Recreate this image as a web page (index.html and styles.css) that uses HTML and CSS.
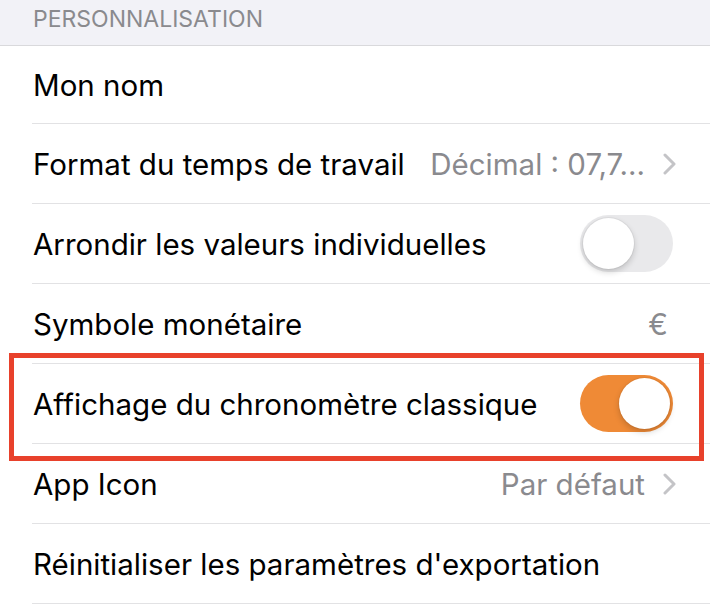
FILE: index.html
```html
<!DOCTYPE html>
<html lang="fr">
<head>
<meta charset="utf-8">
<title>Personnalisation</title>
<link rel="stylesheet" href="styles.css">
</head>
<body>
<div class="screen">
  <div class="section-header">PERSONNALISATION</div>
  <div class="list">
    <div class="row first">
      <span class="label">Mon nom</span>
    </div>
    <div class="row">
      <span class="label">Format du temps de travail</span>
      <span class="detail"><span class="value">Décimal : 07,7...</span><svg class="chevron" viewBox="0 0 13 22" width="13" height="22"><path d="M2 2 L11 11 L2 20" fill="none" stroke="#c4c4c7" stroke-width="3" stroke-linecap="round" stroke-linejoin="round"/></svg></span>
    </div>
    <div class="row">
      <span class="label">Arrondir les valeurs individuelles</span>
      <span class="toggle off"><span class="knob"></span></span>
    </div>
    <div class="row">
      <span class="label">Symbole monétaire</span>
      <span class="detail"><span class="value euro">€</span></span>
    </div>
    <div class="row">
      <span class="label">Affichage du chronomètre classique</span>
      <span class="toggle on"><span class="knob"></span></span>
    </div>
    <div class="row">
      <span class="label">App Icon</span>
      <span class="detail"><span class="value">Par défaut</span><svg class="chevron" viewBox="0 0 13 22" width="13" height="22"><path d="M2 2 L11 11 L2 20" fill="none" stroke="#c4c4c7" stroke-width="3" stroke-linecap="round" stroke-linejoin="round"/></svg></span>
    </div>
    <div class="row">
      <span class="label">Réinitialiser les paramètres d'exportation</span>
    </div>
  </div>
  <div class="highlight"></div>
</div>
</body>
</html>
```

FILE: styles.css
```css
html, body {
  margin: 0;
  padding: 0;
  background: #ffffff;
}

.screen {
  position: relative;
  width: 710px;
  height: 604px;
  overflow: hidden;
  font-family: Inter, "Liberation Sans", Arial, sans-serif;
  background: #ffffff;
}

.section-header {
  height: 46px;
  box-sizing: border-box;
  padding: 7px 0 0 33px;
  font-size: 23px;
  line-height: 24px;
  color: #8a8a8e;
  background: #f2f2f7;
  border-bottom: 1px solid #d9d9dc;
}

.list {
  display: flex;
  flex-direction: column;
}

.row {
  display: flex;
  align-items: center;
  justify-content: space-between;
  margin-left: 32px;
  height: 80px;
  box-sizing: border-box;
  padding-left: 1px;
  padding-right: 34px;
  border-bottom: 1px solid #e2e2e4;
}

.row.first {
  height: 78px;
}

.label {
  font-size: 29.5px;
  color: #000000;
  white-space: nowrap;
}

.detail {
  display: flex;
  align-items: center;
  gap: 18px;
}

.value {
  font-size: 29.5px;
  color: #8a8a8e;
  white-space: nowrap;
}

.value.euro {
  margin-right: 8px;
}

.chevron {
  display: block;
}

.toggle {
  position: relative;
  display: block;
  width: 93px;
  height: 57px;
  border-radius: 29px;
  margin-right: 3px;
  flex-shrink: 0;
}

.toggle.off {
  background: #e9e9eb;
}

.toggle.on {
  background: #ef8a36;
}

.knob {
  position: absolute;
  top: 3px;
  width: 51px;
  height: 51px;
  border-radius: 50%;
  background: #ffffff;
  box-shadow: 0 3px 6px rgba(0, 0, 0, 0.18), 0 0 0 1px rgba(0, 0, 0, 0.04);
}

.toggle.off .knob {
  left: 3px;
}

.toggle.on .knob {
  right: 3px;
}

.highlight {
  position: absolute;
  left: 9px;
  top: 353px;
  width: 695px;
  height: 108px;
  box-sizing: border-box;
  border: 5px solid #e8412b;
  pointer-events: none;
}
```
